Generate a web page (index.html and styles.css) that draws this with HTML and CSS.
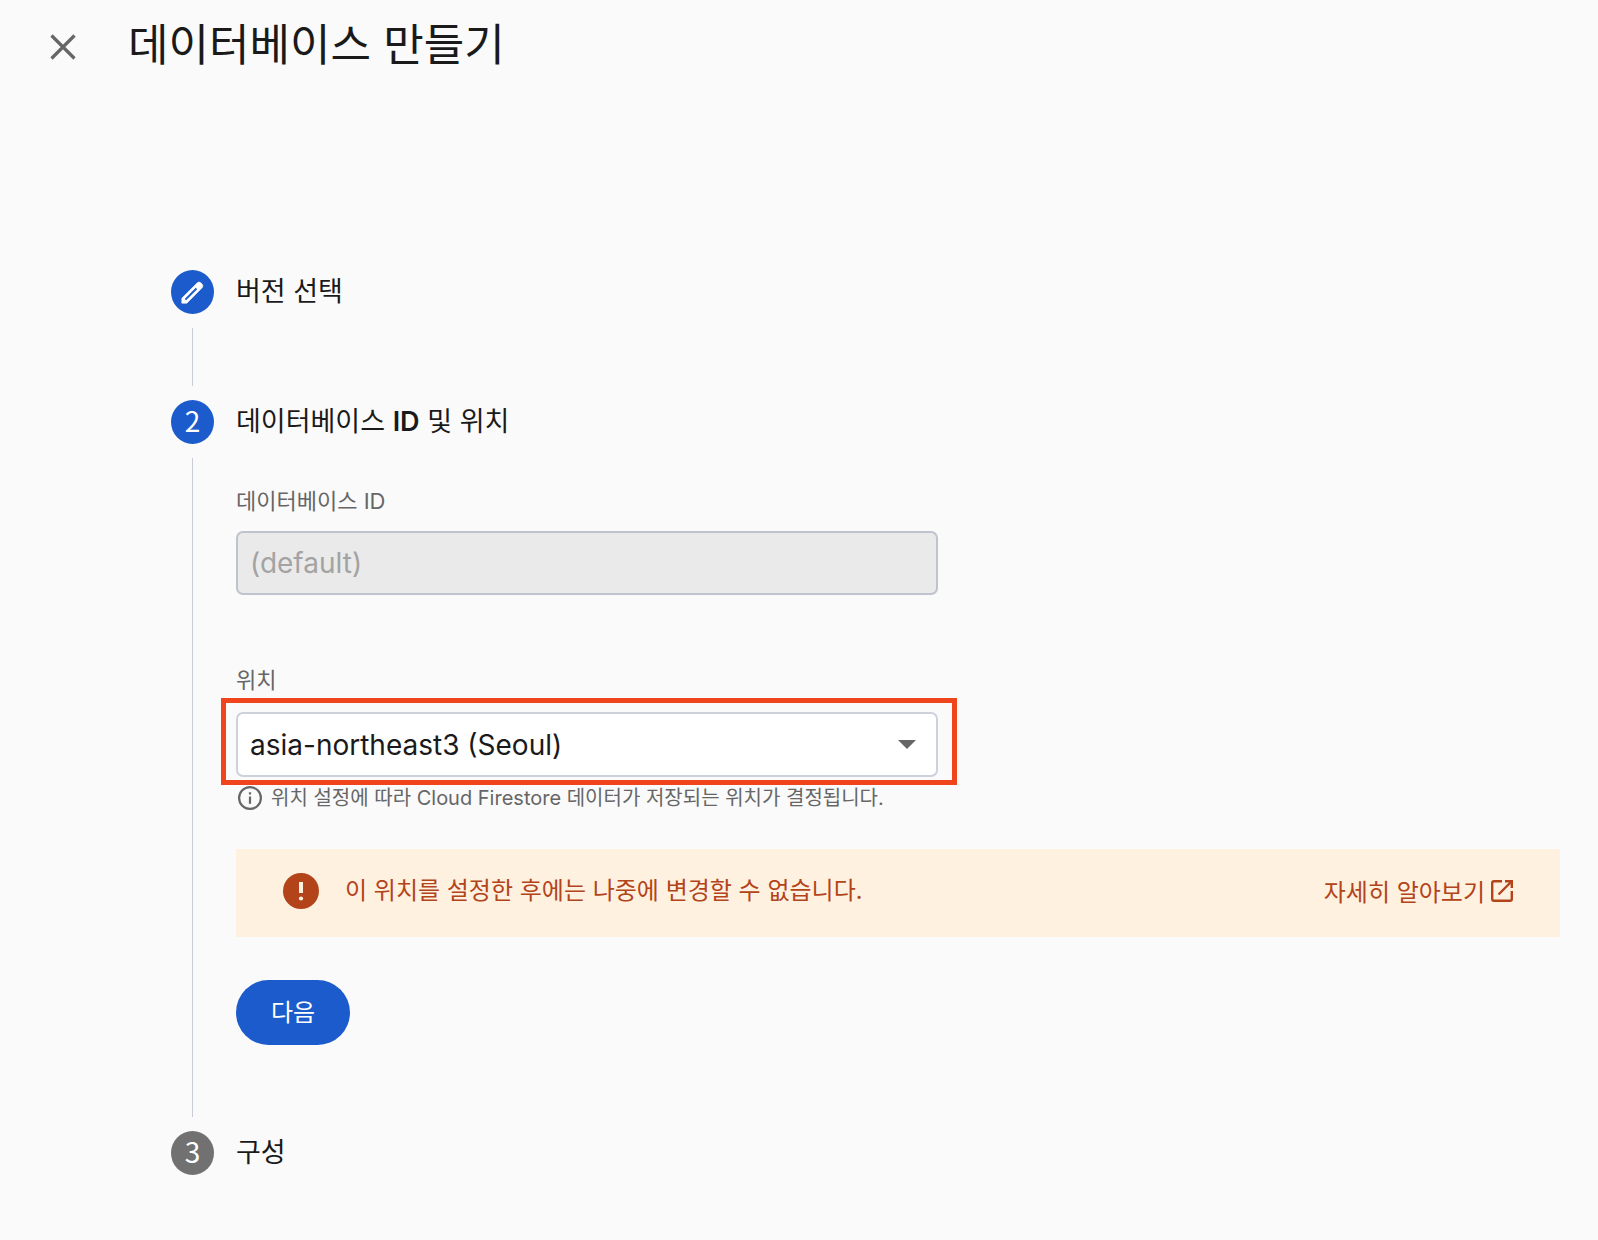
FILE: index.html
```html
<!DOCTYPE html>
<html lang="ko">
<head>
<meta charset="utf-8">
<meta name="viewport" content="width=device-width, initial-scale=1">
<title>데이터베이스 만들기</title>
<link rel="stylesheet" href="styles.css">
</head>
<body>
<header class="header">
  <button class="close" type="button" aria-label="닫기">
    <svg viewBox="0 0 26 26" width="26" height="26"><path d="M1.500 1.500 24.500 24.500M24.500 1.500 1.500 24.500" fill="none" stroke="currentColor" stroke-width="3.200"/></svg>
  </button>
  <h1 class="title">데이터베이스 만들기</h1>
</header>
<main class="stepper">
  <section class="step">
    <div class="rail">
      <span class="badge">
        <svg viewBox="0 0 22 22" width="23" height="23"><path d="M.8 21.200v-4.800L15.400 1.800q1.800-1.600 3.500-.1l1.300 1.300q1.500 1.700 0 3.500L5.600 21.200z" fill="currentColor" stroke="currentColor" stroke-width=".6" stroke-linejoin="round"/><path d="M4.200 17.800 14.800 7.200" stroke="#1c5bcb" stroke-width="1.900"/></svg>
      </span>
      <span class="line"></span>
    </div>
    <div class="content"><h2 class="step-title">버전 선택</h2></div>
  </section>
  <section class="step">
    <div class="rail"><span class="badge">2</span><span class="line"></span></div>
    <div class="content">
      <h2 class="step-title">데이터베이스 <strong class="strong">ID</strong> 및 위치</h2>
      <form class="form">
        <div class="field">
          <label class="label" for="database-id">데이터베이스 ID</label>
          <input class="control" id="database-id" type="text" value="(default)" disabled>
        </div>
        <div class="field">
          <label class="label" for="location">위치</label>
          <div class="select-wrap">
            <select class="control select" id="location"><option>asia-northeast3 (Seoul)</option></select>
            <svg class="arrow" viewBox="0 0 18 9" width="18" height="9"><path d="M0 0h18L9 9z" fill="currentColor"/></svg>
            <span class="highlight"></span>
          </div>
          <p class="hint">
            <svg viewBox="0 0 24 24" width="24" height="24"><circle cx="12" cy="12" r="10.900" fill="none" stroke="currentColor" stroke-width="2.200"/><path d="M12 10.500v7.200M12 6.200v2.300" stroke="currentColor" stroke-width="2.200"/></svg>
            위치 설정에 따라 Cloud Firestore 데이터가 저장되는 위치가 결정됩니다.
          </p>
        </div>
        <div class="alert">
          <svg viewBox="0 0 36 36" width="36" height="36"><circle cx="18" cy="18" r="18" fill="currentColor"/><path d="M18 9v11" stroke="#fff1e0" stroke-width="4"/><circle cx="18" cy="25.500" r="2.100" fill="#fff1e0"/></svg>
          <p class="alert-text">이 위치를 설정한 후에는 나중에 변경할 수 없습니다.</p>
          <a class="alert-link" href="#">자세히 알아보기
            <svg viewBox="0 0 22 22" width="22" height="22"><path d="M11 1.200H3q-1.800 0-1.800 1.800v16q0 1.800 1.800 1.800h16q1.800 0 1.800-1.800v-8M7.500 14.500 20 2" fill="none" stroke="currentColor" stroke-width="2.400"/><path d="M14 0h8v8h-2.400V2.400H14z" fill="currentColor"/></svg>
          </a>
        </div>
        <button class="next" type="button">다음</button>
      </form>
    </div>
  </section>
  <section class="step">
    <div class="rail"><span class="badge badge-pending">3</span></div>
    <div class="content"><h2 class="step-title">구성</h2></div>
  </section>
</main>
</body>
</html>
```
FILE: styles.css
```css
* {
  box-sizing: border-box;
}

body {
  margin: 0;
  background: #fafafa;
  color: #1a1a1b;
  font-family: Inter, "Noto Sans CJK KR", sans-serif;
}

h1, h2, p {
  margin: 0;
}

svg {
  display: block;
  flex: none;
}

button, input, select {
  font-family: inherit;
}

.header {
  display: flex;
  align-items: center;
  gap: 51px;
  padding: 12px 50px;
}

.close {
  display: flex;
  padding: 0;
  border: 0;
  background: none;
  color: #666;
}

.title {
  padding: 0 0 10px 1px;
  font-family: "Noto Sans CJK KR", sans-serif;
  font-size: 44px;
  font-weight: 400;
  line-height: 60px;
}

.stepper {
  padding: 176px 38px 64px 171px;
}

.step {
  display: flex;
  gap: 22px;
}

.rail {
  display: flex;
  flex: none;
  flex-direction: column;
  align-items: center;
  width: 43px;
}

.badge {
  display: flex;
  align-items: center;
  justify-content: center;
  width: 43px;
  height: 44px;
  border-radius: 50%;
  background: #1c5bcb;
  color: #fff;
  font-family: "Noto Sans CJK KR", sans-serif;
  font-size: 28px;
  line-height: 41px;
}

.badge:not(:has(svg)) {
  padding-bottom: 3px;
}

.badge-pending {
  background: #717171;
}

.line {
  flex: 1;
  width: 1px;
  min-height: 58px;
  margin: 14px 0;
  background: #c8ccd6;
}

.content {
  flex: 1;
  min-width: 0;
}

.step-title {
  font-size: 27px;
  font-weight: 400;
  line-height: 44px;
}

.strong {
  font-weight: 600;
}

.form {
  padding: 39px 0 86px;
}

.field {
  margin-bottom: 67px;
}

.field + .field {
  margin-bottom: 36px;
}

.label {
  display: block;
  margin-bottom: 12px;
  color: #666;
  font-size: 22px;
  line-height: 36px;
}

.field + .field .label {
  margin-bottom: 14px;
}

.control {
  display: block;
  width: 100%;
  max-width: 702px;
  height: 64px;
  padding: 0 12px;
  border: 2px solid #cdd1dc;
  border-radius: 7px;
  background: #fff;
  color: #1a1a1b;
  font-size: 28px;
}

.control:disabled {
  border-color: #bfc3ce;
  background: #eaeaea;
  color: #a3a3a3;
}

.select-wrap {
  position: relative;
  max-width: 702px;
}

.select {
  height: 65px;
  appearance: none;
}

.arrow {
  position: absolute;
  top: 28px;
  right: 22px;
  color: #666;
  pointer-events: none;
}

.highlight {
  position: absolute;
  inset: -14px -19px -8px -15px;
  border: 5px solid #f0441c;
  pointer-events: none;
}

.hint {
  display: flex;
  align-items: center;
  gap: 9px;
  padding: 6px 0 0 2px;
  color: #666;
  font-size: 20px;
  line-height: 30px;
}

.alert {
  display: flex;
  align-items: center;
  gap: 26px;
  min-height: 88px;
  padding: 0 47px 4px;
  background: #fff1e0;
  color: #b3441a;
  font-family: "Noto Sans CJK KR", sans-serif;
  font-size: 24px;
  line-height: 36px;
}

.alert-text {
  flex: 1;
  padding-bottom: 4px;
}

.alert-link {
  display: flex;
  align-items: center;
  gap: 6px;
  color: inherit;
  text-decoration: none;
}

.next {
  display: block;
  height: 65px;
  margin-top: 43px;
  padding: 0 35px 4px;
  border: 0;
  border-radius: 33px;
  background: #1c5bcb;
  color: #fff;
  font-size: 24px;
  font-weight: 400;
}
```
